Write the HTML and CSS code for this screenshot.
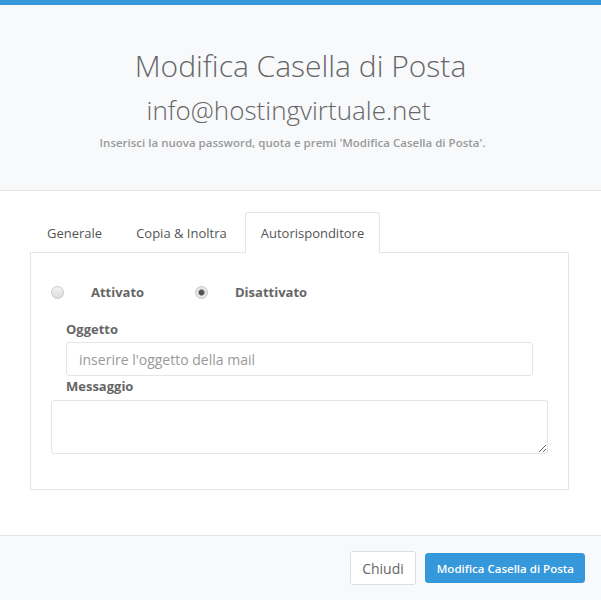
FILE: index.html
```html
<!DOCTYPE html>
<html lang="it">
<head>
  <meta charset="UTF-8" />
  <meta name="viewport" content="width=device-width, initial-scale=1" />
  <title>Modifica Casella di Posta</title>
  <link rel="stylesheet" href="styles.css">
</head>
<body>

  <header class="modal-header">
    <h1>Modifica Casella di Posta</h1>
    <h2>info@hostingvirtuale.net</h2>
    <p>Inserisci la nuova password, quota e premi 'Modifica Casella di Posta'.</p>
  </header>

  <main class="modal-body">
    <nav class="tabs">
      <a href="#generale">Generale</a>
      <a href="#copia">Copia &amp; Inoltra</a>
      <a href="#auto" class="active">Autorisponditore</a>
    </nav>

    <section class="tab-panel" id="auto">
      <div class="radios">
        <label class="radio"><input type="radio" name="stato"> <span>Attivato</span></label>
        <label class="radio"><input type="radio" name="stato" checked> <span>Disattivato</span></label>
      </div>

      <div class="field indent">
        <label for="oggetto">Oggetto</label>
        <input id="oggetto" type="text" placeholder="inserire l'oggetto della mail">
      </div>

      <div class="field">
        <label for="messaggio" class="indent-label">Messaggio</label>
        <textarea id="messaggio"></textarea>
      </div>
    </section>
  </main>

  <footer class="modal-footer">
    <button class="btn">Chiudi</button>
    <button class="btn btn-primary">Modifica Casella di Posta</button>
  </footer>

</body>
</html>
```

FILE: styles.css
```css
body {
  margin: 0;
  font-family: "Open Sans", Arial, sans-serif;
  font-size: 13px;
  color: #555;
  background-color: #ffffff;
}

.modal-header {
  border-top: 5px solid #3498db;
  border-bottom: 1px solid #e5e5e5;
  background-color: #f8f9fb;
  height: 191px;
  box-sizing: border-box;
  padding-top: 42px;
  text-align: center;
}

.modal-header h1 {
  margin: 0;
  font-size: 30px;
  font-weight: 300;
  line-height: 38px;
  color: #666;
}

.modal-header h2 {
  margin: 9px 0 0;
  padding-right: 24px;
  font-size: 26px;
  font-weight: 300;
  line-height: 32px;
  color: #666;
}

.modal-header p {
  margin: 9px 0 0;
  padding-right: 16px;
  font-size: 11.5px;
  font-weight: 600;
  color: #999;
}

.modal-body {
  padding: 21px 32px 45px 30px;
}

.tabs {
  display: flex;
  padding-left: 1px;
}

.tabs a {
  display: block;
  padding: 0 15px;
  height: 39px;
  line-height: 40px;
  margin-right: 2px;
  border: 1px solid transparent;
  border-bottom: none;
  border-radius: 3px 3px 0 0;
  text-decoration: none;
  color: #555;
  font-size: 13px;
}

.tabs a.active {
  border-color: #e5e5e5;
  background-color: #fff;
  margin-bottom: -1px;
  height: 40px;
  position: relative;
}

.tab-panel {
  border: 1px solid #e5e5e5;
  padding: 24px 20px 35px;
}

.radios {
  display: flex;
  height: 30px;
  align-items: center;
}

.radio {
  display: flex;
  align-items: center;
  width: 144px;
  font-weight: 700;
  color: #666;
}

.radio input {
  appearance: none;
  margin: 0 27px 0 0;
  width: 13px;
  height: 13px;
  border: 1px solid #c8c8c8;
  border-radius: 50%;
  background: linear-gradient(#f2f2f2, #dcdcdc);
  box-sizing: border-box;
}

.radio input:checked {
  background: radial-gradient(circle, #555 0, #555 2.5px, #e8e8e8 3.5px, #dcdcdc 100%);
}

.field {
  display: flex;
  flex-direction: column;
}

.indent {
  padding: 0 15px;
  margin-top: 11px;
}

.field label {
  font-weight: 700;
  color: #666;
  line-height: 22px;
  padding-bottom: 2px;
}

.field .indent-label {
  padding-left: 15px;
  padding-bottom: 1px;
  margin-top: -1px;
}

.field input {
  height: 34px;
  box-sizing: border-box;
  border: 1px solid #e5e5e5;
  border-radius: 3px;
  padding: 0 12px;
  font-family: "Open Sans", Arial, sans-serif;
  font-size: 14px;
  color: #555;
}

.field input::placeholder {
  color: #999;
}

.field textarea {
  height: 54px;
  box-sizing: border-box;
  border: 1px solid #e5e5e5;
  border-radius: 3px;
  margin-top: 2px;
  font-family: "Open Sans", Arial, sans-serif;
}

.modal-footer {
  border-top: 1px solid #e5e5e5;
  background-color: #f8f9fb;
  display: flex;
  justify-content: flex-end;
  align-items: flex-start;
  gap: 9px;
  padding: 15px 16px 0 0;
  height: 65px;
  box-sizing: border-box;
}

.btn {
  font-family: "Open Sans", Arial, sans-serif;
  font-size: 14px;
  height: 34px;
  padding: 0 11px;
  border: 1px solid #ddd;
  border-radius: 3px;
  background-color: #fff;
  color: #666;
}

.btn-primary {
  margin-top: 2px;
  height: 30px;
  font-size: 11.5px;
  font-weight: 600;
  padding: 0 10px 0 11px;
  border-color: #3498db;
  background-color: #3498db;
  color: #fff;
}
```
